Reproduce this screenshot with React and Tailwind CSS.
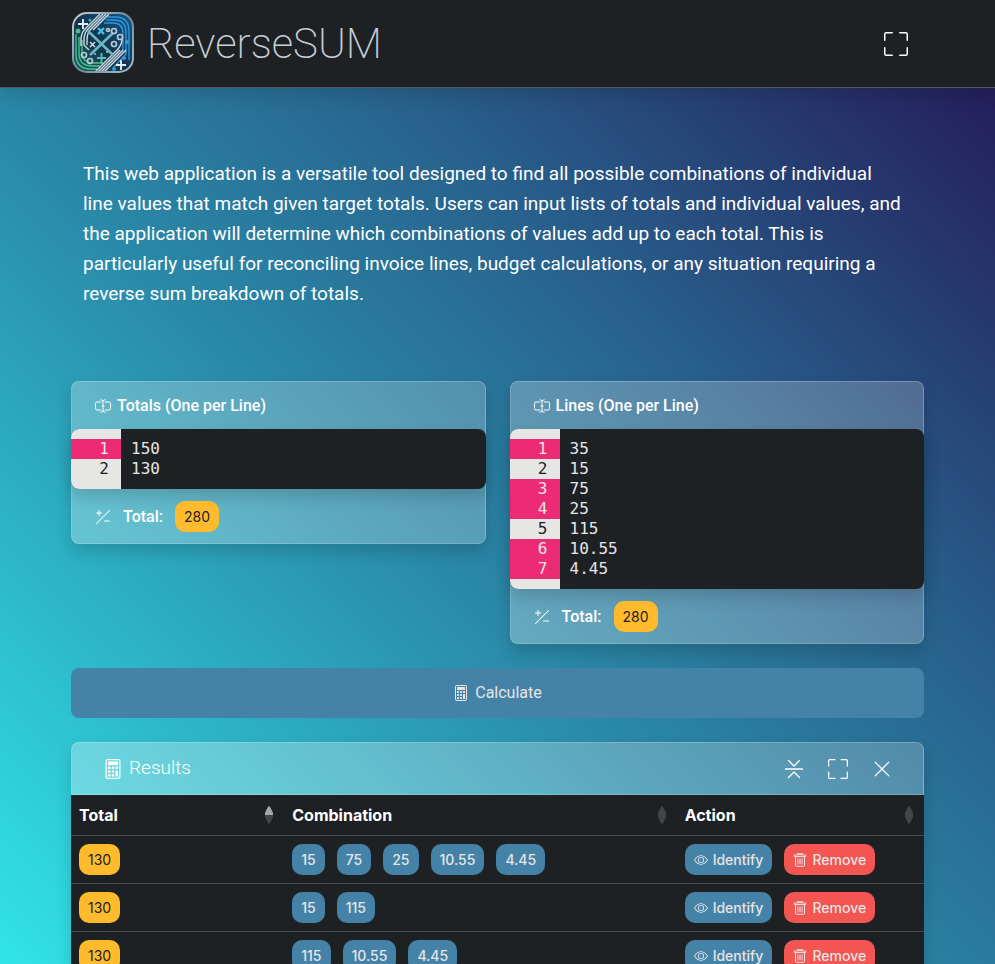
import { useState } from "react";
import { BsFullscreen, BsCalculator, BsPlusSlashMinus, BsEye, BsXLg } from "react-icons/bs";

function Logo() {
  return (
    <svg viewBox="0 0 64 64" className="h-16 w-16" aria-hidden="true">
      <defs>
        <linearGradient id="edge" x1="0" y1="0" x2="1" y2="1">
          <stop offset="0" stopColor="#c3d0d4" />
          <stop offset="0.5" stopColor="#71899a" />
          <stop offset="1" stopColor="#a6bccb" />
        </linearGradient>
        <linearGradient id="core" x1="0" y1="1" x2="1" y2="0">
          <stop offset="0" stopColor="#1b6b62" />
          <stop offset="0.45" stopColor="#12324a" />
          <stop offset="1" stopColor="#155a8c" />
        </linearGradient>
        <clipPath id="tile"><rect x="3" y="2" width="57" height="57" rx="13" /></clipPath>
      </defs>
      <rect x="2" y="1" width="60" height="59" rx="14" fill="url(#core)" stroke="url(#edge)" strokeWidth="2" />
      <g clipPath="url(#tile)" fill="none" strokeWidth="1.300">
        <g stroke="#2f9be0">
          <path d="M36 5H44Q58 5 58 19V48" />
          <path d="M35 8H43Q55 8 55 20V42L42 56" />
          <path d="M33 11H42Q52 11 52 21V38" />
        </g>
        <g stroke="#4fc493">
          <path d="M5 22V42Q5 57 20 57H26" />
          <path d="M8 25V41Q8 54 21 54H29" />
          <path d="M11 28V40Q11 51 23 51H32" />
        </g>
        <g stroke="#cfdbe1" strokeWidth="1.400">
          <path d="M29 2L14 17Q10 21 10 28V34" />
          <path d="M32 2L17 17Q13 21 13 28V33L18 38" />
          <path d="M35 2L19 18Q16 22 16 28V33" />
          <path d="M38 2L22 18" />
          <path d="M22 62L46 38Q51 33 51 27" />
          <path d="M25 62L49 38" />
          <path d="M28 62L52 38" />
          <path d="M31 62L55 38" />
        </g>
        <path d="M17 19L42 43M42 21L19 43" stroke="#68b6c4" strokeWidth="2.600" />
        <path d="M7 12H17M12 7V17M45 53H55M50 48V58" stroke="#e0edf2" strokeWidth="1.900" />
        <path d="M27 16L33 22M33 16L27 22" stroke="#45c5e8" strokeWidth="2.200" />
        <path d="M19 30L24 35M24 30L19 35" stroke="#d5e2e6" strokeWidth="1.400" />
        <path d="M26 46H35M30.500 41V51" stroke="#58c2b8" strokeWidth="1.800" />
        <g stroke="#b4cbd4" strokeWidth="1.700">
          <circle cx="43" cy="19" r="2.500" /><circle cx="49" cy="25" r="2.500" />
          <circle cx="43" cy="32" r="2.500" /><circle cx="37" cy="18" r="1.500" />
          <circle cx="13" cy="43" r="2.500" /><circle cx="19" cy="49" r="2.500" />
        </g>
        <circle cx="7" cy="19" r="2.500" fill="#55b88a" />
        <circle cx="56" cy="30" r="2" fill="#3b95d9" />
        <circle cx="53" cy="46" r="2" fill="#3b95d9" />
        <circle cx="43" cy="57" r="2" fill="#3b95d9" />
        <circle cx="19" cy="8" r="1.500" fill="#4aa8c9" />
        <circle cx="24" cy="42" r="1" fill="#9fc5d0" />
        <circle cx="36" cy="40" r="1" fill="#9fc5d0" />
      </g>
    </svg>
  );
}

function CursorIcon() {
  return (
    <svg viewBox="0 0 16 16" className="h-4 w-4 shrink-0" fill="none" stroke="currentColor" strokeWidth="1" aria-hidden="true">
      <path d="M6.200 4H2Q.5 4 .5 5.500v5Q.5 12 2 12h4.200M9.800 4H14q1.500 0 1.500 1.500v5Q15.500 12 14 12H9.800M8 3v10M5.500 1.800Q7.700 1.800 8 3.200Q8.300 1.800 10.500 1.800M5.500 14.200Q7.700 14.200 8 12.800Q8.300 14.200 10.500 14.200M6.500 8h3" />
    </svg>
  );
}

function CollapseIcon() {
  return (
    <svg viewBox="0 0 20 20" className="size-5" fill="none" stroke="currentColor" strokeWidth="1.300" strokeLinecap="round" strokeLinejoin="round" aria-hidden="true">
      <path d="M1.500 10H18.500M4.500 1.500L10 7L15.500 1.500M4.500 18.500L10 13L15.500 18.500" />
    </svg>
  );
}

function TrashIcon() {
  return (
    <svg viewBox="0 0 14 14" className="h-3.5 w-3.5 shrink-0" fill="none" stroke="currentColor" strokeWidth="1" aria-hidden="true">
      <path d="M1.500 1.900h11v1.700h-11zM4.800 1.900V.6h4.400v1.300M2.500 3.600V12q0 1.300 1.300 1.300h6.400q1.300 0 1.300-1.300V3.600M5 5.500v6M7 5.500v6M9 5.500v6" />
    </svg>
  );
}

function SortIcon({ active }) {
  return (
    <svg viewBox="0 0 10 20" className="h-5 w-2.5 shrink-0" aria-hidden="true">
      <path d="M5 1Q6 1 9 8V10H1V8Q4 1 5 1Z" fill={active ? "#a5a6a7" : "#414547"} />
      <path d="M1 10H9V12Q6 19 5 19Q4 19 1 12Z" fill="#414547" />
    </svg>
  );
}

function Editor({ id, title, initial, marked }) {
  const [value, setValue] = useState(initial);
  const lines = value.split("\n");
  const total = lines.reduce((sum, line) => sum + (Number(line) || 0), 0);
  return (
    <section className="rounded-lg border border-white/20 bg-[linear-gradient(45deg,#ffffff47,#ffffff33)] shadow-[0_8px_16px_#00000026]">
      <label htmlFor={id} className="flex h-[47px] items-center gap-1.5 px-[23px] font-[Roboto,sans-serif] text-base font-medium text-white">
        <CursorIcon />
        {title}
      </label>
      <div className="-mx-px flex overflow-hidden rounded-lg bg-[#1e2124] font-['DejaVu_Sans_Mono',monospace] text-base/5 text-[#e6e6e4] shadow-[0_8px_16px_#00000026]">
        <div className="w-[50px] bg-[#e6e6e4] py-2.5" aria-hidden="true">
          {lines.map((_, i) => (
            <div key={i} className={marked.includes(i + 1) ? "bg-[#ed2b75] pr-3 text-right text-[#e6e6e4]" : "pr-3 text-right text-[#1e2124]"}>{i + 1}</div>
          ))}
        </div>
        <textarea id={id} rows={lines.length} value={value} onChange={(e) => setValue(e.target.value)} className="block min-w-0 flex-1 resize-none overflow-hidden bg-transparent p-2.5 outline-none" />
      </div>
      <div className="flex items-center px-[23px] pt-3 pb-[11px] text-white">
        <BsPlusSlashMinus className="mr-3 size-4" />
        <span className="mr-3 font-[Roboto,sans-serif] font-medium">Total:</span>
        <span className="rounded-[10px] bg-[#ffbb2b] px-[9px] py-[5px] text-sm/[21px] text-[#1e2124]">{total}</span>
      </div>
    </section>
  );
}

const results = [
  { total: "130", parts: ["15", "75", "25", "10.55", "4.45"] },
  { total: "130", parts: ["15", "115"] },
  { total: "130", parts: ["115", "10.55", "4.45"] },
  { total: "150", parts: ["35", "115"] },
];

export default function App() {
  return (
    <div className="h-screen overflow-y-auto bg-[linear-gradient(45deg,#30e4e8_0%,#2a8ba9_42%,#28618c_65%,#241454_100%)] font-[Inter,sans-serif] text-white [scrollbar-width:none]">
      <header className="border-b border-[#555759] bg-[#1e2124] shadow-[0_8px_16px_#0000001a]">
        <div className="mx-auto flex h-[87px] max-w-[877px] items-center justify-between px-3">
          <a href="#" className="flex items-center gap-3 font-[Roboto,sans-serif] text-[42px] font-extralight text-[#c9cfd6]">
            <Logo />
            ReverseSUM
          </a>
          <button type="button" aria-label="Fullscreen" className="mr-4 text-white">
            <BsFullscreen className="size-6" />
          </button>
        </div>
      </header>
      <main className="mx-auto max-w-[877px] px-3">
        <p className="pt-[71px] pr-5 pb-[72px] pl-3 font-[Roboto,sans-serif] text-[19px]/[30px]">
          This web application is a versatile tool designed to find all possible combinations of individual line values that match given target totals. Users can input lists of totals and individual values, and the application will determine which combinations of values add up to each total. This is particularly useful for reconciling invoice lines, budget calculations, or any situation requiring a reverse sum breakdown of totals.
        </p>
        <div className="grid grid-cols-2 items-start gap-6">
          <Editor id="totals" title="Totals (One per Line)" initial={"150\n130"} marked={[1]} />
          <Editor id="lines" title="Lines (One per Line)" initial={"35\n15\n75\n25\n115\n10.55\n4.45"} marked={[1, 3, 4, 6, 7]} />
        </div>
        <button type="button" className="mt-6 flex h-[50px] w-full items-center justify-center gap-1.5 rounded-lg bg-[#4582a8] font-[Roboto,sans-serif] text-base text-[#e6e6e4]">
          <BsCalculator className="size-4" />
          Calculate
        </button>
        <section className="mt-6 rounded-lg shadow-[0_8px_16px_#00000026]">
          <div className="flex h-[53px] items-center justify-between rounded-t-lg border border-white/20 bg-[linear-gradient(45deg,#ffffff4d,#ffffff33)] px-[31px]">
            <h2 className="flex items-center gap-1.5 font-[Roboto,sans-serif] text-[19px] font-light">
              <BsCalculator className="size-5" />
              Results
            </h2>
            <div className="flex gap-6">
              <button type="button" aria-label="Collapse"><CollapseIcon /></button>
              <button type="button" aria-label="Fullscreen results"><BsFullscreen className="size-5" /></button>
              <button type="button" aria-label="Close"><BsXLg className="size-5" /></button>
            </div>
          </div>
          <table className="w-full table-fixed border-collapse bg-[#1e2124] text-left">
            <colgroup>
              <col className="w-[25%]" />
              <col className="w-[46%]" />
              <col className="w-[29%]" />
            </colgroup>
            <thead>
              <tr className="border-b border-[#4b4e50]">
                {["Total", "Combination", "Action"].map((name, i) => (
                  <th key={name} className="h-10 py-2 pr-2.5 pl-2 font-bold">
                    <div className="flex items-center justify-between">
                      {name}
                      <SortIcon active={i === 0} />
                    </div>
                  </th>
                ))}
              </tr>
            </thead>
            <tbody className="text-sm/[21px] text-[#e6e6e4]">
              {results.map((row, i) => (
                <tr key={i} className="border-b border-[#4b4e50]">
                  <td className="h-12 px-2"><span className="inline-block rounded-[10px] bg-[#ffbb2b] px-[9px] py-[5px] text-[#1e2124]">{row.total}</span></td>
                  <td className="h-12 px-2">
                    <div className="flex gap-3">
                      {row.parts.map((part) => <span key={part} className="rounded-[10px] bg-[#4582a8] px-[9px] py-[5px] font-medium">{part}</span>)}
                    </div>
                  </td>
                  <td className="h-12 px-2">
                    <div className="flex gap-3">
                      <button type="button" className="flex items-center gap-[5px] rounded-[10px] bg-[#4582a8] px-[9px] py-[5px] font-medium"><BsEye className="size-3.5" />Identify</button>
                      <button type="button" className="flex items-center gap-[5px] rounded-[10px] bg-[#f25552] px-[9px] py-[5px] font-medium"><TrashIcon />Remove</button>
                    </div>
                  </td>
                </tr>
              ))}
            </tbody>
          </table>
        </section>
      </main>
    </div>
  );
}
